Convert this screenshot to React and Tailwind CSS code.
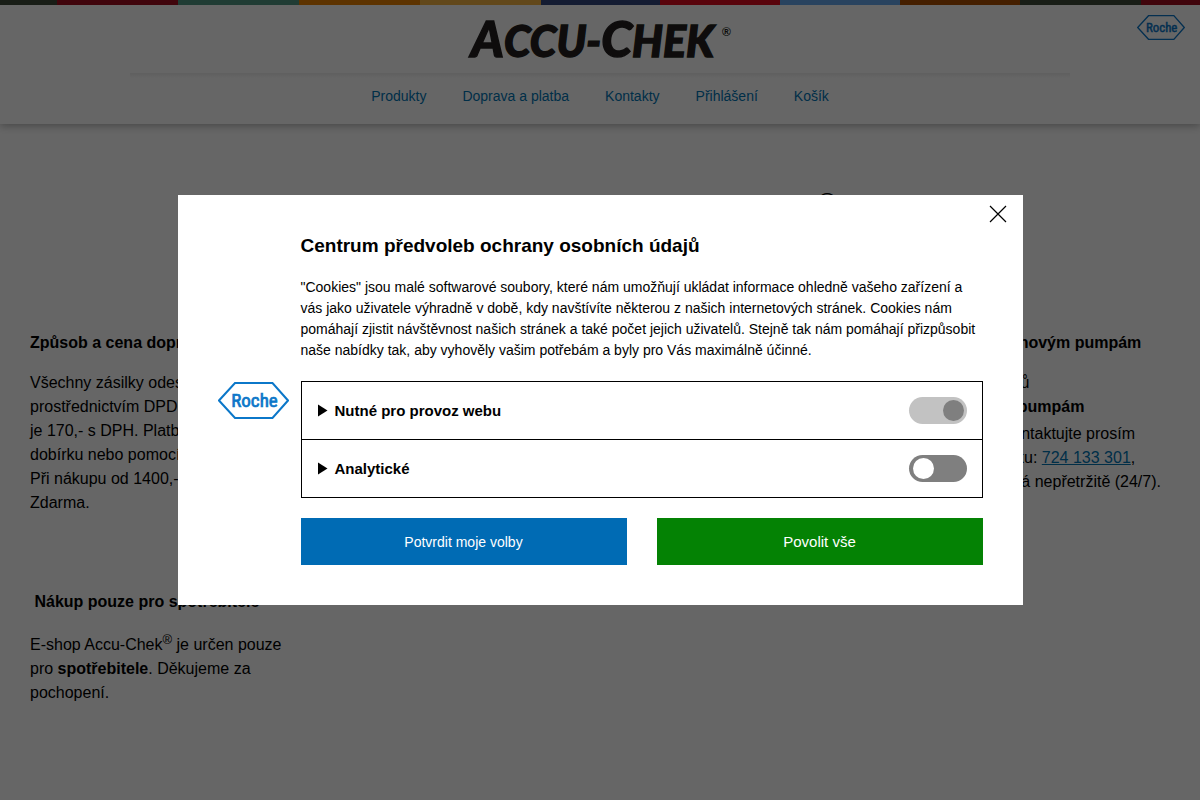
import React, { useEffect, useState } from 'react';

const STRIPES = [
    { color: 'bg-[#3d4a38]', size: 'grow-[57]' },
    { color: 'bg-[#a00d20]', size: 'grow-[121]' },
    { color: 'bg-[#529682]', size: 'grow-[121]' },
    { color: 'bg-[#e88000]', size: 'grow-[121]' },
    { color: 'bg-[#f5b544]', size: 'grow-[121]' },
    { color: 'bg-[#33467d]', size: 'grow-[119]' },
    { color: 'bg-[#df0a20]', size: 'grow-[120]' },
    { color: 'bg-[#66a8ee]', size: 'grow-[120]' },
    { color: 'bg-[#ad4e00]', size: 'grow-[120]' },
    { color: 'bg-[#3d4a38]', size: 'grow-[121]' },
    { color: 'bg-[#a00d20]', size: 'grow-[59]' },
];

const NAV = ['Produkty', 'Doprava a platba', 'Kontakty', 'Přihlášení', 'Košík'];

const RocheLogo = ({ className }) => (
    <svg viewBox="0 0 71 37" className={className} role="img" aria-label="Roche">
        <path d="M17 1H54.5L70 18.5L54.5 36H17L1 18.5Z" fill="none" stroke="#0b77c9" strokeWidth="2" />
        <text
            x="36.5"
            y="25"
            textAnchor="middle"
            fontSize="19"
            fontWeight="400"
            fill="#0b77c9"
            stroke="#0b77c9"
            strokeWidth="0.7"
            fontFamily="'Liberation Sans Narrow', 'Roboto Condensed', 'Open Sans Condensed', 'Liberation Sans', sans-serif"
        >
            Roche
        </text>
    </svg>
);

const AccuChekLogo = () => (
    <svg viewBox="0 0 264 38" className="h-[38px] w-[264px] overflow-visible" role="img" aria-label="Accu-Chek">
        <text
            x="3"
            y="37"
            fontSize="43"
            fontWeight="900"
            fontStyle="italic"
            fill="#231f20"
            stroke="#231f20"
            strokeWidth="1.4"
            fontFamily="Lato, 'Open Sans', sans-serif"
        >
            <tspan fontSize="50">A</tspan>
            <tspan>CCU-</tspan>
            <tspan fontSize="50">C</tspan>
            <tspan>HEK</tspan>
        </text>
        <text x="254" y="16" fontSize="12" fontWeight="700" fill="#231f20" fontFamily="'Liberation Sans', sans-serif">
            ®
        </text>
    </svg>
);

const Header = () => (
    <header className="bg-white shadow-[0_2px_8px_rgba(0,0,0,0.3)]">
        <div className="flex h-[5px]">
            {STRIPES.map((s, i) => (
                <div key={i} className={`basis-0 ${s.color} ${s.size}`} />
            ))}
        </div>
        <div className="grid h-[68px] grid-cols-[1fr_auto_1fr] px-[15px]">
            <a href="#" className="col-start-2 pt-[15px]">
                <AccuChekLogo />
            </a>
            <a href="#" className="justify-self-end pt-[10px]">
                <RocheLogo className="h-[25px] w-12" />
            </a>
        </div>
        <div className="mx-auto h-[5px] max-w-[940px] bg-linear-to-b from-[#eeeeee] to-white" />
        <nav className="flex h-[46px] justify-center gap-9 pt-2 text-sm leading-[20px] text-[#0075b5]">
            {NAV.map((item) => (
                <a key={item} href="#">{item}</a>
            ))}
        </nav>
    </header>
);

const InfoBlock = ({ title, className = '', children }) => (
    <section className={`px-[15px] ${className}`}>
        <h2 className="mb-4 font-bold whitespace-pre">{title}</h2>
        <p className="whitespace-nowrap">{children}</p>
    </section>
);

const Sup = () => <sup className="static align-super text-[13px] leading-[19px]">®</sup>;

const ConsentRow = ({ label, checked, disabled, onChange }) => {
    const [open, setOpen] = useState(false);

    return (
        <div className="flex items-center justify-between p-[15px]">
            <button
                type="button"
                aria-expanded={open}
                onClick={() => setOpen(!open)}
                className="flex items-center gap-[7px] text-[15px] leading-[25px] font-bold"
            >
                <svg viewBox="0 0 11 13" className={`h-[13px] w-[11px] ${open ? 'rotate-90' : ''}`}>
                    <path d="M1 0.5L10.5 6.5L1 12.5Z" />
                </svg>
                {label}
            </button>
            <input
                type="checkbox"
                aria-label={label}
                checked={checked}
                disabled={disabled}
                onChange={onChange}
                className="flex h-[27px] w-[58px] cursor-pointer appearance-none items-center rounded-full bg-[#7f7f7f] px-1 before:size-[21px] before:rounded-full before:bg-white checked:justify-end checked:bg-[#006bb4] disabled:cursor-default disabled:bg-[#c2c2c2] disabled:pr-[3px] disabled:before:bg-[#7f7f7f]"
            />
        </div>
    );
};

const CookieModal = ({ onClose }) => {
    const [analytics, setAnalytics] = useState(false);

    // Close on escape
    useEffect(() => {
        const handleKeyDown = (e) => {
            if (e.key === 'Escape') onClose();
        };
        document.addEventListener('keydown', handleKeyDown);
        return () => document.removeEventListener('keydown', handleKeyDown);
    }, [onClose]);

    return (
        <div className="fixed inset-0 z-50 flex items-center justify-center bg-black/60">
            <div
                role="dialog"
                aria-modal="true"
                aria-labelledby="cookie-title"
                className="relative flex w-full max-w-[845px] items-center gap-3 bg-white p-10"
            >
                <button type="button" aria-label="Zavřít" onClick={onClose} className="absolute top-[10px] right-4">
                    <svg viewBox="0 0 18 18" className="size-[18px]">
                        <path d="M1 1L17 17M17 1L1 17" stroke="#000" strokeWidth="1.2" />
                    </svg>
                </button>

                <RocheLogo className="h-[37px] w-[71px] shrink-0" />

                <div className="flex-1">
                    <h1 id="cookie-title" className="mb-5 text-[19px] leading-[22px] font-bold">
                        Centrum předvoleb ochrany osobních údajů
                    </h1>
                    <p className="mb-5 text-sm leading-[21px]">
                        "Cookies" jsou malé softwarové soubory, které nám umožňují ukládat informace ohledně vašeho
                        zařízení a vás jako uživatele výhradně v době, kdy navštívíte některou z našich internetových
                        stránek. Cookies nám pomáhají zjistit návštěvnost našich stránek a také počet jejich uživatelů.
                        Stejně tak nám pomáhají přizpůsobit naše nabídky tak, aby vyhověly vašim potřebám a byly pro Vás
                        maximálně účinné.
                    </p>

                    <div className="mb-5 divide-y divide-black border border-black">
                        <ConsentRow label="Nutné pro provoz webu" checked disabled onChange={() => {}} />
                        <ConsentRow
                            label="Analytické"
                            checked={analytics}
                            onChange={(e) => setAnalytics(e.target.checked)}
                        />
                    </div>

                    <div className="grid grid-cols-2 gap-[30px] text-white">
                        <button type="button" onClick={onClose} className="h-[47px] bg-[#006bb4] text-sm">
                            Potvrdit moje volby
                        </button>
                        <button
                            type="button"
                            onClick={onClose}
                            className="h-[47px] bg-[#048204] text-[15px] leading-[25px]"
                        >
                            Povolit vše
                        </button>
                    </div>
                </div>
            </div>
        </div>
    );
};

export default function App() {
    const [showCookies, setShowCookies] = useState(true);

    return (
        <div className="min-h-screen bg-white font-['Liberation_Sans',Arial,sans-serif] text-black">
            <Header />

            <main className="px-[15px] pt-[65px]">
                <h1 className="mb-[94px] h-12 text-center text-4xl leading-[48px]">
                    Vítejte v e-shopu Accu-Chek<sup>®</sup>
                </h1>

                <div className="grid grid-cols-4 gap-y-[75px]">
                    <InfoBlock title="Způsob a cena dopravy">
                        Všechny zásilky odesíláme<br />
                        prostřednictvím DPD. Cena<br />
                        je 170,- s DPH. Platba na<br />
                        dobírku nebo pomocí karty.<br />
                        Při nákupu od 1400,- je<br />
                        Zdarma.
                    </InfoBlock>
                    <InfoBlock title="Dotazy k inzulinovým pumpám" className="col-start-4">
                        V případě dotazů<br />
                        <b>k inzulinovým pumpám</b><br />
                        Accu-Chek<Sup />, kontaktujte prosím<br />
                        zákaznickou linku: <a href="tel:724133301" className="text-[#0075b5] underline">724 133 301</a>,<br />
                        která je dostupná nepřetržitě (24/7).
                    </InfoBlock>
                    <InfoBlock title={'\u00a0Nákup pouze pro spotřebitele'}>
                        E-shop Accu-Chek<Sup /> je určen pouze<br />
                        pro <b>spotřebitele</b>. Děkujeme za<br />
                        pochopení.
                    </InfoBlock>
                </div>
            </main>

            {showCookies && <CookieModal onClose={() => setShowCookies(false)} />}
        </div>
    );
}
